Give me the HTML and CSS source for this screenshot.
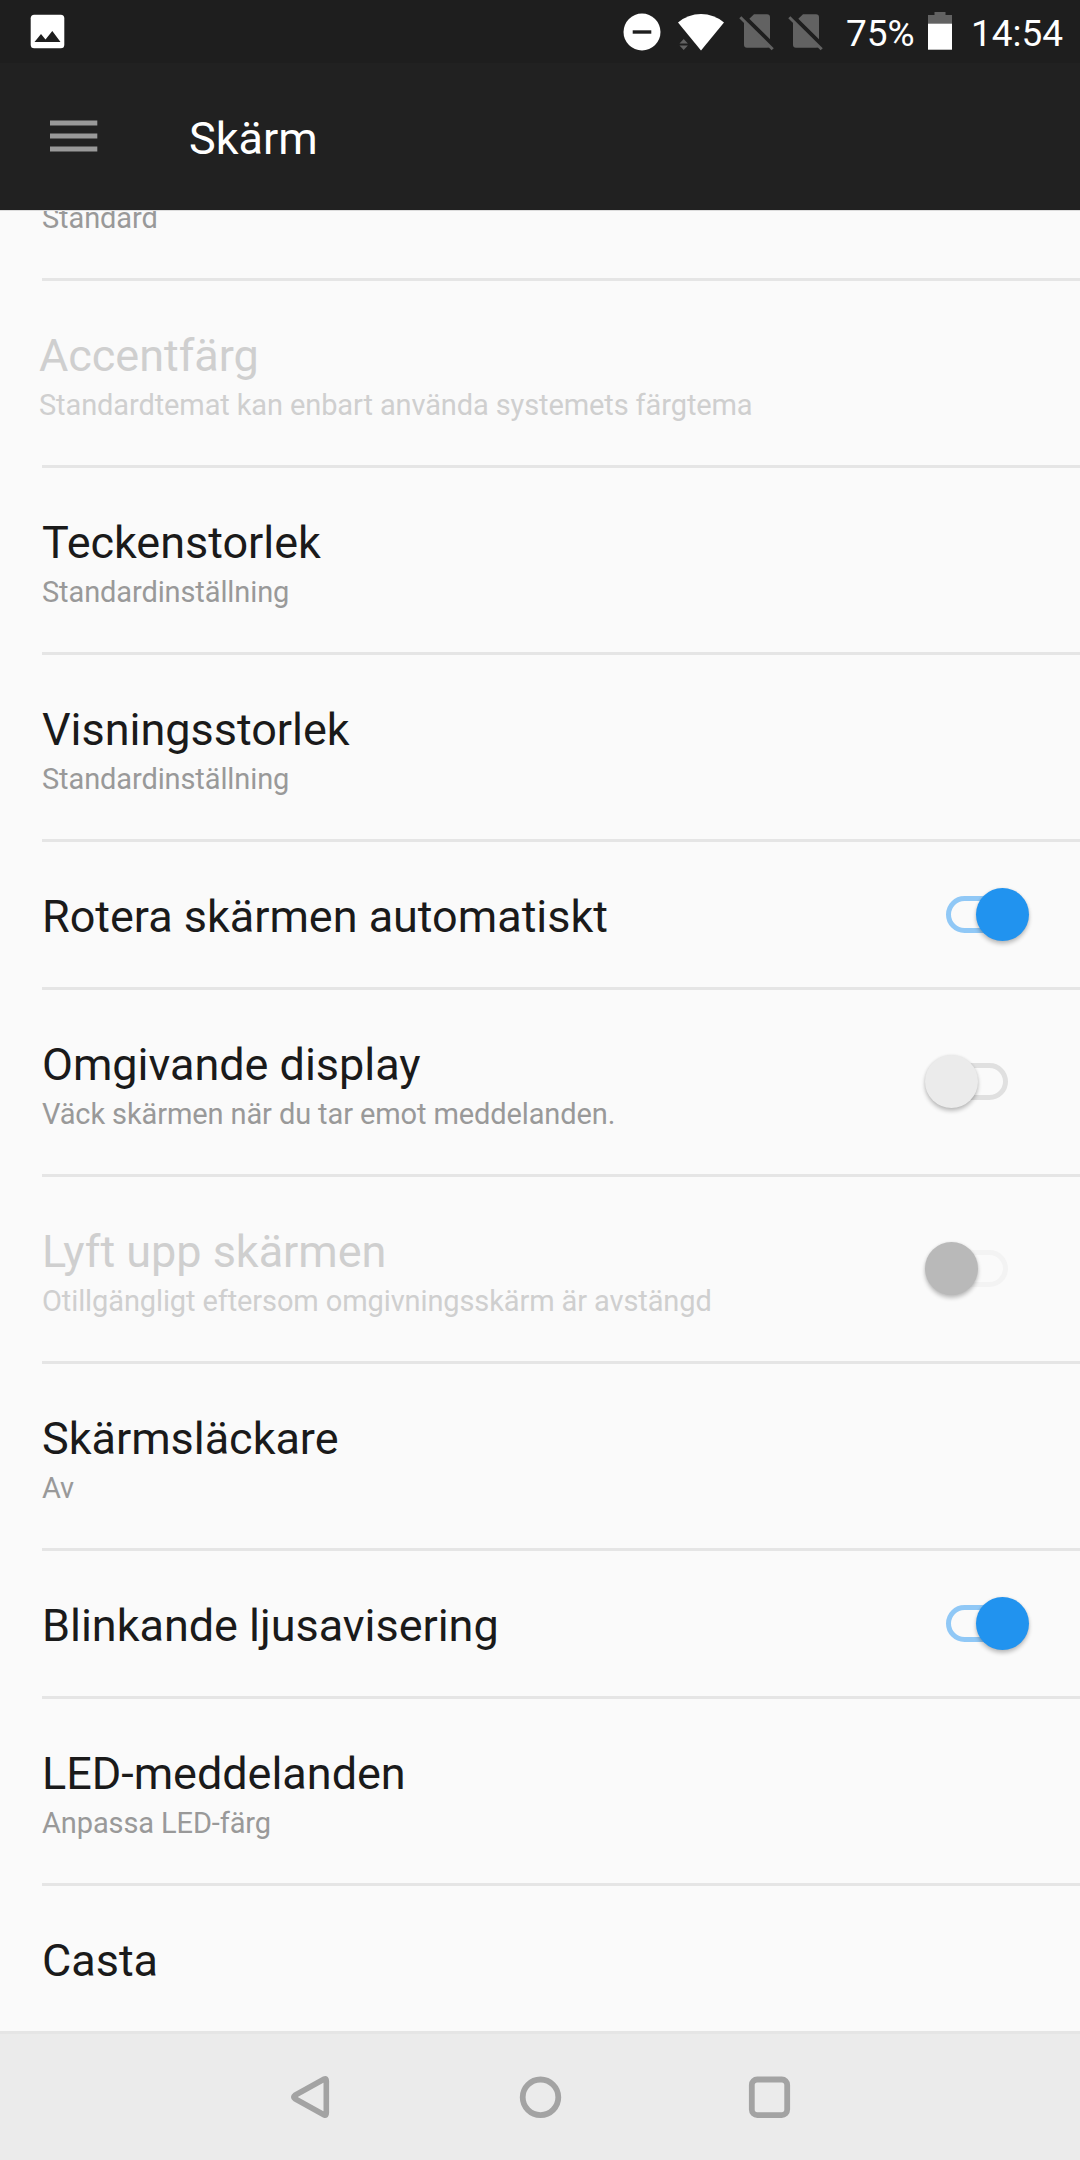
FILE: index.html
```html
<!DOCTYPE html>
<html lang="sv">
<head>
<meta charset="utf-8">
<title>Skärm</title>
<link rel="stylesheet" href="styles.css">
</head>
<body>
<div class="screen">
  <div class="statusbar">
    <svg class="icon-picture" width="36" height="36" viewBox="0 0 36 36"><rect x=".7" y=".7" width="33.6" height="33.6" rx="3.5" fill="#fff"/><path d="M4.5 28 L11 20 L15.5 25.5 L22.3 17 L30.5 28 Z" fill="#1e1e1e"/></svg>
    <svg class="icon-dnd" width="38" height="38" viewBox="0 0 38 38"><circle cx="19" cy="19" r="18.5" fill="#fff"/><rect x="9.7" y="17.3" width="18.6" height="3.4" fill="#1e1e1e"/></svg>
    <svg class="icon-wifi" width="46" height="38" viewBox="0 0 46 38"><path d="M0 9.5 Q10 1 23 1 T46 9.5 L23 37.5 Z" fill="#fff"/><path d="M1.5 30.5 L5.7 26 L9.9 30.5 Z M1.5 32.5 L5.7 37 L9.9 32.5 Z" fill="#626262"/></svg>
    <svg class="icon-sim" width="36" height="38" viewBox="0 0 36 38"><path d="M10.3 5.8 L15 1.3 H28 Q31 1.3 31 4.3 V26.2 Z M5 8 L31 34 Q30.5 34.7 28 34.7 H8 Q5 34.7 5 31.7 Z" fill="#626262"/><path d="M1.3 4.3 L33.7 36.3" stroke="#626262" stroke-width="3"/></svg>
    <svg class="icon-sim" width="36" height="38" viewBox="0 0 36 38"><path d="M10.3 5.8 L15 1.3 H28 Q31 1.3 31 4.3 V26.2 Z M5 8 L31 34 Q30.5 34.7 28 34.7 H8 Q5 34.7 5 31.7 Z" fill="#626262"/><path d="M1.3 4.3 L33.7 36.3" stroke="#626262" stroke-width="3"/></svg>
    <span class="battery-level">75%</span>
    <svg class="icon-battery" width="24" height="38" viewBox="0 0 24 38"><path d="M0 12 V3 H6.5 V0 H17.5 V3 H24 V12 Z" fill="#626262"/><rect y="11.7" width="24" height="26" fill="#fff"/></svg>
    <span class="clock">14:54</span>
  </div>
  <header class="appbar">
    <svg class="menu" width="48" height="32" viewBox="0 0 48 32"><path d="M0 3 H47.3 M0 16 H47.3 M0 29 H47.3" stroke="#999" stroke-width="5.2"/></svg>
    <h1 class="appbar-title">Skärm</h1>
  </header>
  <main class="list">
    <div class="row row-clipped"><div class="texts"><div class="summary">Standard</div></div></div>
    <div class="row row-disabled row-shifted"><div class="texts"><div class="title">Accentfärg</div><div class="summary">Standardtemat kan enbart använda systemets färgtema</div></div></div>
    <div class="row"><div class="texts"><div class="title">Teckenstorlek</div><div class="summary">Standardinställning</div></div></div>
    <div class="row"><div class="texts"><div class="title">Visningsstorlek</div><div class="summary">Standardinställning</div></div></div>
    <div class="row"><div class="texts"><div class="title">Rotera skärmen automatiskt</div></div><div class="switch on"><span class="track"></span><span class="thumb"></span></div></div>
    <div class="row"><div class="texts"><div class="title">Omgivande display</div><div class="summary">Väck skärmen när du tar emot meddelanden.</div></div><div class="switch"><span class="track"></span><span class="thumb"></span></div></div>
    <div class="row row-disabled"><div class="texts"><div class="title">Lyft upp skärmen</div><div class="summary">Otillgängligt eftersom omgivningsskärm är avstängd</div></div><div class="switch"><span class="track"></span><span class="thumb"></span></div></div>
    <div class="row"><div class="texts"><div class="title">Skärmsläckare</div><div class="summary">Av</div></div></div>
    <div class="row"><div class="texts"><div class="title">Blinkande ljusavisering</div></div><div class="switch on"><span class="track"></span><span class="thumb"></span></div></div>
    <div class="row"><div class="texts"><div class="title">LED-meddelanden</div><div class="summary">Anpassa LED-färg</div></div></div>
    <div class="row row-last"><div class="texts"><div class="title">Casta</div></div></div>
  </main>
  <nav class="navbar">
    <svg width="44" height="44" viewBox="0 0 44 44"><path d="M35.3 4 Q37.3 3 37.3 6 V38 Q37.3 41 35.3 40 L6 23.8 Q3.5 22 6 20.2 Z" fill="none" stroke="#a3a3a3" stroke-width="5.6" stroke-linejoin="round"/></svg>
    <svg width="44" height="44" viewBox="0 0 44 44"><circle cx="22.5" cy="22.3" r="17.8" fill="none" stroke="#a3a3a3" stroke-width="5.8"/></svg>
    <svg width="44" height="44" viewBox="0 0 44 44"><rect x="4.8" y="4.5" width="35.4" height="35.6" rx="5.5" fill="none" stroke="#a3a3a3" stroke-width="5.8"/></svg>
  </nav>
</div>
</body>
</html>
```
FILE: styles.css
```css
* { box-sizing: border-box; }
body { margin: 0; background: #fafafa; font-family: Roboto, sans-serif; }
.screen { width: 1080px; height: 2160px; display: flex; flex-direction: column; overflow: hidden; }

.statusbar { flex: none; height: 63px; padding: 13px 0 0 30px; display: flex; align-items: flex-start; background: #1e1e1e; color: #fff; font-size: 37px; line-height: 38px; }
.statusbar svg { flex: none; }
.icon-picture { margin-top: 1px; }
.icon-dnd { margin-left: 557px; }
.icon-wifi { margin-left: 17px; }
.icon-sim { margin-left: 15px; }
.icon-sim + .icon-sim { margin-left: 13px; }
.battery-level { width: 68px; margin: 2px 0 0 22px; white-space: nowrap; }
.icon-battery { margin: -1px 0 0 14px; }
.clock { margin: 2px 0 0 19px; }

.appbar { flex: none; height: 147px; padding-left: 50px; display: flex; align-items: center; background: #212121; color: #fff; }
.menu { flex: none; margin-bottom: 1px; }
.appbar-title { margin: 3px 0 0 91px; font-size: 45px; line-height: 53px; font-weight: 400; }

.list { flex: none; height: 1824px; border-top: 1px solid #dcdcdc; display: flex; flex-direction: column; background: #fafafa; }
.row { flex: none; margin-left: 42px; padding-right: 48px; border-bottom: 3px solid #e5e5e5; display: flex; align-items: center; justify-content: space-between; }
.texts { padding: 48px 0 44px; display: flex; flex-direction: column; }
.title { font-size: 45px; line-height: 53px; letter-spacing: -.03px; color: #1a1a1a; white-space: nowrap; }
.summary { margin: 6px 0 -2px; font-size: 29px; line-height: 35px; letter-spacing: -.11px; color: #999; white-space: nowrap; }
.row-clipped { height: 70px; align-items: flex-end; overflow: hidden; }
.row-shifted .texts { margin-left: -3px; }
.row-disabled .title, .row-disabled .summary { color: #cfcfcf; }
.row-last { margin-left: 0; padding-left: 42px; }

.switch { flex: none; position: relative; width: 110px; height: 53px; margin-bottom: 1px; }
.track { position: absolute; left: 22px; top: 8px; width: 64px; height: 37px; border: 5px solid #e0e0e0; border-radius: 19px; }
.thumb { position: absolute; left: 3px; top: 0; width: 53px; height: 53px; border-radius: 50%; background: #ebebeb; box-shadow: 0 3px 4px rgba(0,0,0,.24), 0 0 3px rgba(0,0,0,.08); }
.on .track { left: 24px; border-color: #90c8f6; }
.on .thumb { left: 54px; background: #2193ef; }
.row-disabled .track { border-color: #f3f3f3; }
.row-disabled .thumb { background: #b9b9b9; }

.navbar { flex: none; height: 126px; padding-left: 289px; display: flex; align-items: center; gap: 185px; background: #ebebeb; }
```
